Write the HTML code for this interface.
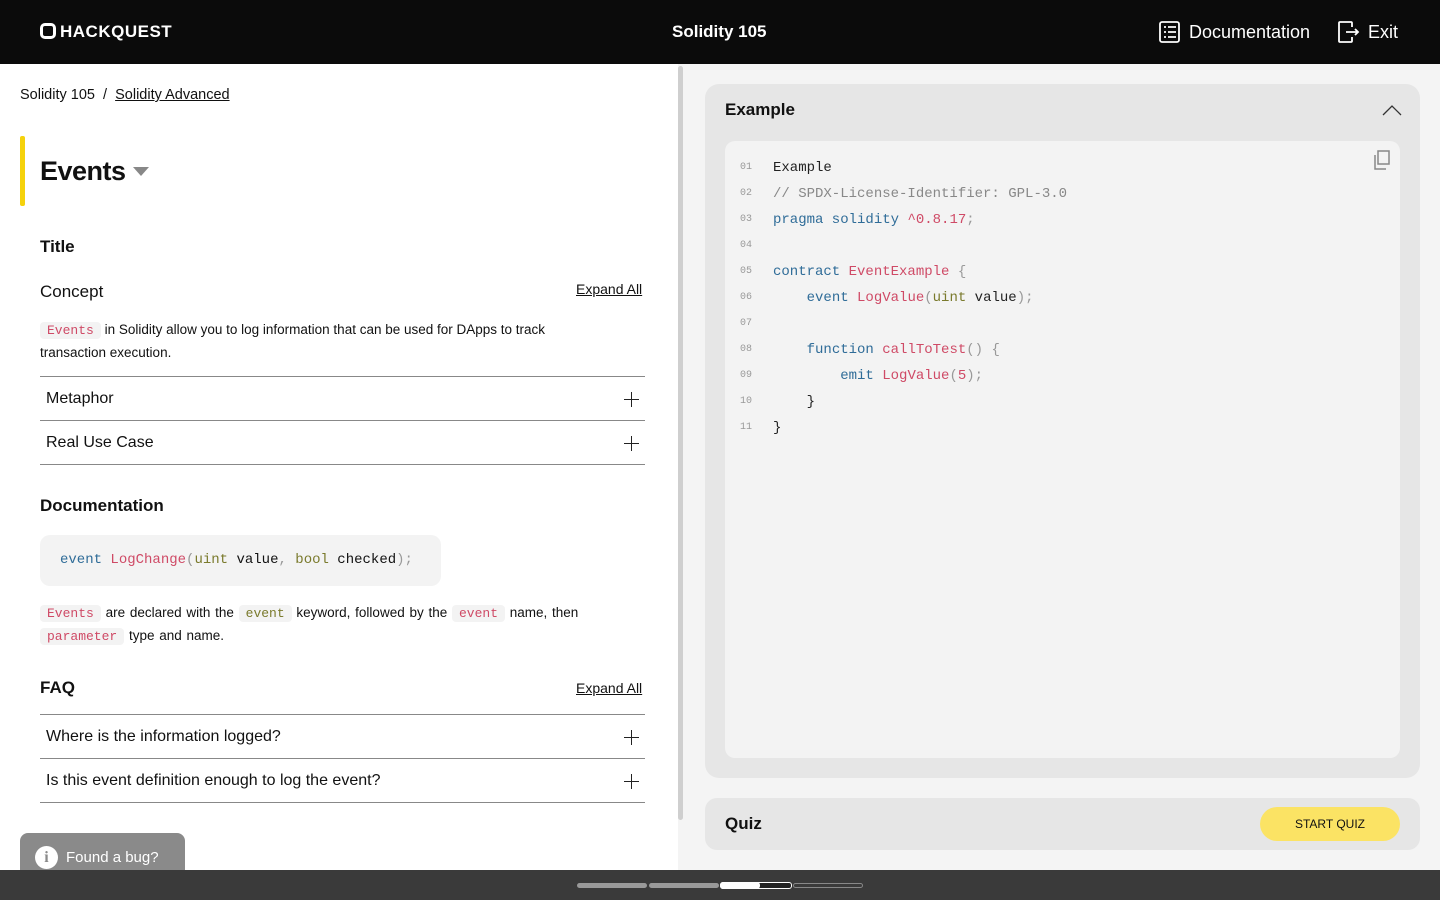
<!DOCTYPE html>
<html><head><meta charset="utf-8"><style>
*{margin:0;padding:0;box-sizing:border-box}
body{width:1440px;height:900px;overflow:hidden;font-family:"Liberation Sans",sans-serif;background:#fff;position:relative;color:#111}
.hdr{position:absolute;left:0;top:0;width:1440px;height:64px;background:#0b0b0b;color:#fff}
.abs{position:absolute}
.mono{font-family:"Liberation Mono",monospace}
.k{color:#2f6c98}.r{color:#cf4a66}.o{color:#7a7a2c}.g{color:#999}
.chip{font-family:"Liberation Mono",monospace;background:#f3f3f3;border-radius:4px;padding:1px 7px;font-size:13px}
.row{position:absolute;left:40px;width:605px;height:44px;border-bottom:1px solid #888;font-size:16px}
.row span{position:absolute;left:6px;top:13px}
.plus{position:absolute;right:6px;top:15px;width:15px;height:15px}
.plus:before,.plus:after{content:"";position:absolute;background:#222}
.plus:before{left:7px;top:0;width:1px;height:15px}
.plus:after{top:7px;left:0;height:1px;width:15px}
.ln{position:absolute;left:740px;font-size:10px;color:#999;font-family:"Liberation Mono",monospace}
.cd{position:absolute;left:773px;font-size:14px;font-family:"Liberation Mono",monospace;color:#222;white-space:pre}
.cd.c{color:#888}
</style></head><body>
<div class="hdr">
 <div class="abs" style="left:40px;top:23px;width:16px;height:16px;border:3px solid #fff;border-radius:5px"></div>
 <div class="abs" style="left:60px;top:22px;font-weight:bold;font-size:17px;letter-spacing:0.5px">HACKQUEST</div>
 <div class="abs" style="left:672px;top:22px;font-weight:bold;font-size:17px">Solidity 105</div>
 <svg class="abs" style="left:1159px;top:21px" width="22" height="22" viewBox="0 0 22 22" fill="none" stroke="#fff" stroke-width="1.8"><rect x="1" y="1" width="19" height="20" rx="2"/><path d="M5 6h2M9 6h8M5 11h2M9 11h8M5 16h2M9 16h8"/></svg>
 <div class="abs" style="left:1189px;top:22px;font-size:18px">Documentation</div>
 <svg class="abs" style="left:1338px;top:21px" width="24" height="22" viewBox="0 0 24 22" fill="none" stroke="#fff" stroke-width="1.8"><path d="M14 6V2a1 1 0 0 0-1-1H2a1 1 0 0 0-1 1v18a1 1 0 0 0 1 1h11a1 1 0 0 0 1-1v-4M8 11h12M17 8l3 3-3 3"/></svg>
 <div class="abs" style="left:1368px;top:22px;font-size:18px">Exit</div>
</div>

<div class="abs" style="left:20px;top:87px;font-size:14.5px">Solidity 105 &nbsp;/&nbsp; <u>Solidity Advanced</u></div>
<div class="abs" style="left:20px;top:136px;width:5px;height:70px;background:#f5d20c;border-radius:2px"></div>
<div class="abs" style="left:40px;top:156px;font-size:27px;font-weight:bold;letter-spacing:-0.5px">Events</div>
<div class="abs" style="left:133px;top:167px;border-left:8px solid transparent;border-right:8px solid transparent;border-top:9px solid #888"></div>
<div class="abs" style="left:40px;top:237px;font-size:17px;font-weight:bold">Title</div>
<div class="abs" style="left:40px;top:282px;font-size:17px">Concept</div>
<div class="abs" style="left:576px;top:281px;font-size:14px;text-decoration:underline">Expand All</div>
<div class="abs" style="left:40px;top:319px;width:560px;font-size:13.5px;line-height:22px"><span class="chip r">Events</span> in Solidity allow you to log information that can be used for DApps to track transaction execution.</div>
<div class="row" style="top:376px;border-top:1px solid #888;height:45px"><span>Metaphor</span><i class="plus"></i></div>
<div class="row" style="top:421px"><span>Real Use Case</span><i class="plus"></i></div>
<div class="abs" style="left:40px;top:496px;font-size:17px;font-weight:bold">Documentation</div>
<div class="abs mono" style="left:40px;top:535px;width:401px;height:51px;background:#f3f3f3;border-radius:10px;padding:17px 20px;font-size:14px;white-space:pre"><span class="k">event</span> <span class="r">LogChange</span><span class="g">(</span><span class="o">uint</span> value<span class="g">,</span> <span class="o">bool</span> checked<span class="g">);</span></div>
<div class="abs" style="left:40px;top:602px;width:600px;font-size:13.5px;line-height:22px;word-spacing:1px"><span class="chip r">Events</span> are declared with the <span class="chip o">event</span> keyword, followed by the <span class="chip r">event</span> name, then <span class="chip r">parameter</span> type and name.</div>
<div class="abs" style="left:40px;top:678px;font-size:17px;font-weight:bold">FAQ</div>
<div class="abs" style="left:576px;top:680px;font-size:14px;text-decoration:underline">Expand All</div>
<div class="row" style="top:714px;border-top:1px solid #888;height:45px"><span>Where is the information logged?</span><i class="plus"></i></div>
<div class="row" style="top:759px"><span>Is this event definition enough to log the event?</span><i class="plus"></i></div>
<div class="abs" style="left:20px;top:833px;width:165px;height:40px;background:#8a8a8a;border-radius:8px 8px 0 0"></div>
<div class="abs" style="left:35px;top:846px;width:23px;height:23px;border-radius:50%;background:#fff;color:#8a8a8a;font-weight:bold;text-align:center;font-size:16px;line-height:23px;font-family:'Liberation Serif',serif">i</div>
<div class="abs" style="left:66px;top:849px;color:#fff;font-size:15px">Found a bug?</div>

<div class="abs" style="left:678px;top:64px;width:8px;height:806px;background:#f4f4f4"></div>
<div class="abs" style="left:678px;top:66px;width:5px;height:754px;background:#cfcfcf;border-radius:3px"></div>
<div class="abs" style="left:686px;top:64px;width:754px;height:806px;background:#f4f4f4"></div>
<div class="abs" style="left:705px;top:84px;width:715px;height:694px;background:#e6e6e6;border-radius:14px"></div>
<div class="abs" style="left:725px;top:100px;font-size:17px;font-weight:bold">Example</div>
<svg class="abs" style="left:1382px;top:104px" width="20" height="12" viewBox="0 0 20 12" fill="none" stroke="#333" stroke-width="1.3"><path d="M1 11L10 2l9 9"/></svg>
<div class="abs" style="left:725px;top:141px;width:675px;height:617px;background:#f3f3f3;border-radius:10px"></div>
<svg class="abs" style="left:1373px;top:150px" width="18" height="20" viewBox="0 0 18 20" fill="none" stroke="#888" stroke-width="1.5"><rect x="5" y="1" width="11" height="13"/><path d="M2 5v14h11"/></svg>
<div class="ln" style="top:162px">01</div><div class="cd" style="top:160px">Example</div>
<div class="ln" style="top:188px">02</div><div class="cd c" style="top:186px">// SPDX-License-Identifier: GPL-3.0</div>
<div class="ln" style="top:214px">03</div><div class="cd" style="top:212px"><span class="k">pragma solidity</span> <span class="r">^0.8.17</span><span class="g">;</span></div>
<div class="ln" style="top:240px">04</div>
<div class="ln" style="top:266px">05</div><div class="cd" style="top:264px"><span class="k">contract</span> <span class="r">EventExample</span> <span class="g">{</span></div>
<div class="ln" style="top:292px">06</div><div class="cd" style="top:290px">    <span class="k">event</span> <span class="r">LogValue</span><span class="g">(</span><span class="o">uint</span> value<span class="g">);</span></div>
<div class="ln" style="top:318px">07</div>
<div class="ln" style="top:344px">08</div><div class="cd" style="top:342px">    <span class="k">function</span> <span class="r">callToTest</span><span class="g">() {</span></div>
<div class="ln" style="top:370px">09</div><div class="cd" style="top:368px">        <span class="k">emit</span> <span class="r">LogValue</span><span class="g">(</span><span class="r">5</span><span class="g">);</span></div>
<div class="ln" style="top:396px">10</div><div class="cd" style="top:394px">    }</div>
<div class="ln" style="top:422px">11</div><div class="cd" style="top:420px">}</div>

<div class="abs" style="left:705px;top:798px;width:715px;height:52px;background:#e6e6e6;border-radius:12px"></div>
<div class="abs" style="left:725px;top:814px;font-size:17px;font-weight:bold">Quiz</div>
<div class="abs" style="left:1260px;top:807px;width:140px;height:34px;background:#fbe364;border-radius:17px;font-size:12px;text-align:center;line-height:34px">START QUIZ</div>

<div class="abs" style="left:0;top:870px;width:1440px;height:30px;background:#3a3a3a"></div>
<div class="abs" style="left:577px;top:883px;width:70px;height:5px;background:#999;border-radius:3px"></div>
<div class="abs" style="left:649px;top:883px;width:70px;height:5px;background:#999;border-radius:3px"></div>
<div class="abs" style="left:720px;top:882px;width:72px;height:7px;background:#222;border:1px solid #fff;border-radius:3px"></div>
<div class="abs" style="left:720px;top:882px;width:40px;height:7px;background:#fff;border-radius:3px"></div>
<div class="abs" style="left:793px;top:883px;width:70px;height:5px;border:1px solid #888;border-radius:3px"></div>
</body></html>
